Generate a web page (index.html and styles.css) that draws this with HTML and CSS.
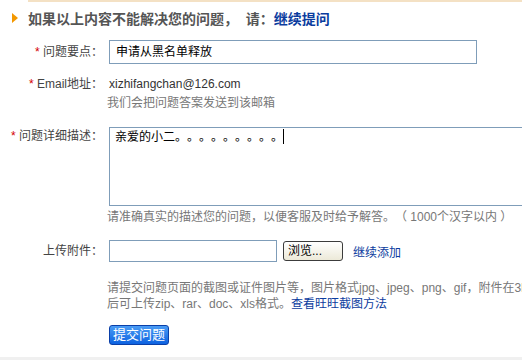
FILE: index.html
```html
<!DOCTYPE html>
<html>

<head>
    <title>提交问题</title>
    <link rel="stylesheet" href="styles.css">
</head>

<body>
    <div class="topline"></div>
    <h2 class="head">
        <span class="arrow"></span>如果以上内容不能解决您的问题，&nbsp;&nbsp;请：<a class="ask">继续提问</a>
    </h2>

    <div class="form">
        <div class="row r-title">
            <label class="lbl"><em>*</em> 问题要点：</label>
            <div class="field"><div class="text-box">申请从黑名单释放</div></div>
        </div>

        <div class="row r-email">
            <label class="lbl"><em>*</em> Email地址：</label>
            <div class="field">
                <div class="email">xizhifangchan@126.com</div>
                <p class="tip">我们会把问题答案发送到该邮箱</p>
            </div>
        </div>

        <div class="row r-desc">
            <label class="lbl"><em>*</em> 问题详细描述：</label>
            <div class="field">
                <div class="area">亲爱的小二。。。。。。。。。<span class="caret"></span></div>
                <p class="tip">请准确真实的描述您的问题，以便客服及时给予解答。（ 1000个汉字以内 ）</p>
            </div>
        </div>

        <div class="row r-file">
            <label class="lbl">上传附件：</label>
            <div class="field file-line">
                <div class="file-box"></div>
                <a class="browse">浏览...</a>
                <a class="more">继续添加</a>
            </div>
        </div>

        <div class="row r-note">
            <span class="lbl"></span>
            <div class="field">
                <p class="tip note">请提交问题页面的截图或证件图片等，图片格式jpg、jpeg、png、gif，附件在3M以内，<br>后可上传zip、rar、doc、xls格式。<a class="more">查看旺旺截图方法</a></p>
                <a class="submit">提交问题</a>
            </div>
        </div>
    </div>

    <div class="bottom"></div>
</body>

</html>
```

FILE: styles.css
```css
html,
body {
    overflow: hidden;
}

body {
    margin: 0;
    width: 560px;
    height: 360px;
    position: relative;
    font-family: "Liberation Sans", "Noto Sans CJK SC", sans-serif;
    font-size: 12px;
    color: #444;
    background: #fff;
    text-spacing-trim: space-all;
}

.topline {
    margin-left: 28px;
    height: 2px;
    background: #f4e1c4;
}

.head {
    display: flex;
    align-items: center;
    margin: 7px 0 0 12px;
    height: 18px;
    font-size: 14px;
    font-weight: bold;
    color: #555;
}

.arrow {
    width: 0;
    height: 0;
    border-left: 6px solid #f39800;
    border-top: 5px solid transparent;
    border-bottom: 5px solid transparent;
    margin-right: 10px;
}

.ask {
    color: #0b3c9e;
    cursor: pointer;
}

.form {
    padding-top: 13px;
}

.row {
    display: grid;
    grid-template-columns: 103px 1fr;
    column-gap: 6px;
}

.lbl {
    text-align: right;
    color: #444;
    line-height: 16px;
}

.lbl em {
    font-style: normal;
    color: #d40000;
}

.text-box {
    width: 360px;
    height: 22px;
    border: 1px solid #7f9db9;
    line-height: 22px;
    padding-left: 6px;
    color: #000;
}

.r-title .lbl {
    line-height: 24px;
}

.r-email {
    margin-top: 12px;
}

.email {
    color: #333;
    line-height: 16px;
}

.tip {
    margin: 3px 0 0 -2px;
    color: #777;
    line-height: 16px;
}

.r-desc {
    margin-top: 16px;
}

.r-desc .lbl {
    margin-top: 1px;
}

.area {
    width: 420px;
    height: 76px;
    border: 1px solid #7f9db9;
    padding: 1px 5px 0;
    color: #000;
    line-height: 16px;
}

.caret {
    display: inline-block;
    width: 1px;
    height: 15px;
    background: #000;
    vertical-align: -3px;
}

.r-file {
    margin-top: 15px;
}

.r-file .lbl {
    line-height: 22px;
}

.file-line {
    display: flex;
    align-items: center;
}

.file-box {
    width: 166px;
    height: 20px;
    border: 1px solid #7f9db9;
}

.browse {
    margin-left: 6px;
    width: 54px;
    height: 18px;
    border: 1px solid #3c3c3c;
    border-radius: 3px;
    background: linear-gradient(#fff, #ece9d8);
    color: #000;
    line-height: 18px;
    padding-left: 4px;
}

.more {
    margin-left: 10px;
    color: #0b3c9e;
    cursor: pointer;
}

.r-note {
    margin-top: 18px;
}

.note {
    margin-top: 0;
    white-space: nowrap;
}

.note .more {
    margin-left: 0;
}

.submit {
    display: inline-block;
    margin-top: 13px;
    padding: 0 3px;
    height: 18px;
    line-height: 18px;
    border: 1px solid #0a3fa8;
    border-radius: 3px;
    background: linear-gradient(#4a9cf5, #0d62e0);
    color: #fff;
    font-size: 13px;
    cursor: pointer;
}

.bottom {
    position: absolute;
    left: 0;
    right: 0;
    bottom: 0;
    height: 3px;
    background: #f0f0f0;
}
```
